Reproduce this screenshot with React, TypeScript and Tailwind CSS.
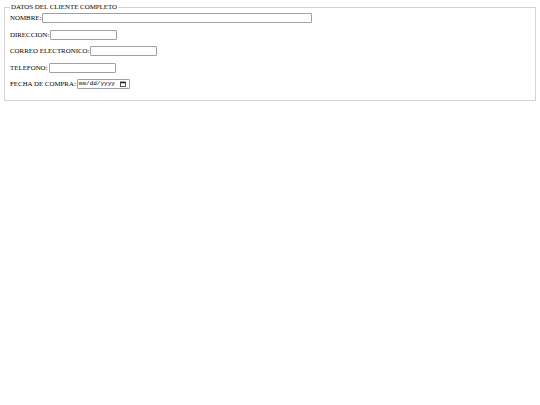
import React from 'react';

// Campos del formulario (el primero va sin párrafo, igual que en la captura)
const CAMPOS = [
    { label: 'DIRECCION:', type: 'text' },
    { label: 'CORREO ELECTRONICO:', type: 'text' },
    { label: 'TELEFONO:', type: 'text' },
];

const inputClass = 'h-[10px] w-[67px] rounded-[1px] border border-[#a0a0a0] bg-white';

export default function App() {
    return (
        <div className="min-h-[405px] bg-white px-[4px] pt-[3px] text-[6.9px] leading-[8px] text-black" style={{ fontFamily: '"Liberation Serif", serif' }}>
            <fieldset className="border border-[#d4d4d4] px-[5px] pb-[4px]">
                <legend className="px-[1px]">DATOS DEL CLIENTE COMPLETO</legend>

                <div className="flex items-center pt-[2px]">
                    <span>NOMBRE:</span>
                    <input type="text" className="ml-[1px] h-[10px] w-[270px] rounded-[1px] border border-[#a0a0a0] bg-white" />
                </div>

                {CAMPOS.map((campo) => (
                    <p key={campo.label} className="mt-[6.6px] flex items-center">
                        <span>{campo.label}</span>
                        <input type={campo.type} className={`ml-[1px] ${inputClass}`} />
                    </p>
                ))}

                <p className="my-[6.6px] flex items-center">
                    <span>FECHA DE COMPRA:</span>
                    <span className="ml-[1px] flex h-[10px] w-[53px] items-center justify-between rounded-[1px] border border-[#a0a0a0] bg-white pl-[1px] pr-[3px] text-[6px]" style={{ fontFamily: '"Liberation Mono", monospace' }}>
                        <span>mm/dd/yyyy</span>
                        <svg width="6" height="6" viewBox="0 0 12 12">
                            <rect x="1" y="2" width="10" height="9" fill="none" stroke="#222" strokeWidth="1.5" />
                            <rect x="1" y="2" width="10" height="2.5" fill="#222" />
                        </svg>
                    </span>
                </p>
            </fieldset>
        </div>
    );
}
